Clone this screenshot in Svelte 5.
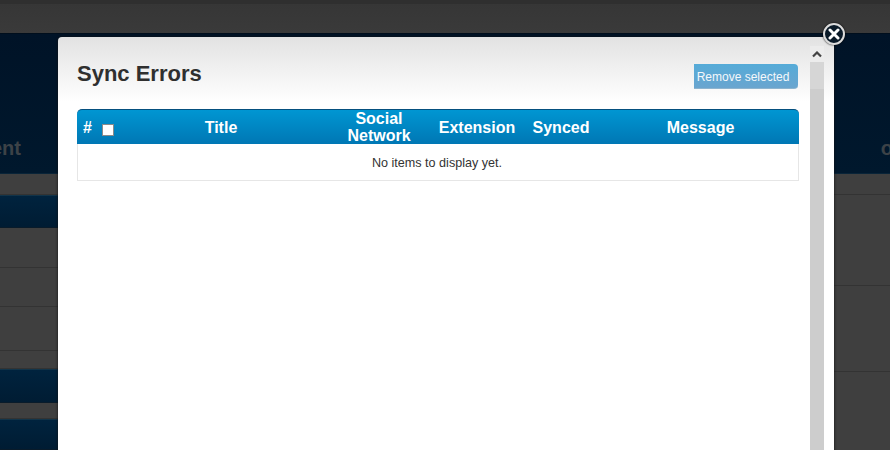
<script>
  const columns = ["Title", "Social Network", "Extension", "Synced", "Message"]
  const leftRows = [
    { kind: "gray", height: 21 },
    { kind: "navy", height: 33 },
    { kind: "gray", height: 40 },
    { kind: "gray", height: 39 },
    { kind: "gray", height: 44 },
    { kind: "gray", height: 18 },
    { kind: "navy", height: 34 },
    { kind: "gray", height: 16 },
    { kind: "navy", height: 31 },
  ]
  const rightRows = [21, 91, 86, 79]
</script>

<div class="page">
  <div class="topbar"></div>
  <div class="hero">
    <span>ent</span>
    <span>o</span>
  </div>
  <div class="rows">
    <div class="col">
      {#each leftRows as row}
        <div class="row {row.kind}" style="height: {row.height}px"></div>
      {/each}
    </div>
    <div class="col">
      {#each rightRows as height}
        <div class="row gray" style="height: {height}px"></div>
      {/each}
    </div>
  </div>

  <div class="modal">
    <div class="content">
      <div class="head">
        <h1>Sync Errors</h1>
        <button type="button">Remove selected</button>
      </div>
      <table>
        <colgroup>
          <col style="width: 21px" />
          <col style="width: 20px" />
          <col style="width: 206px" />
          <col style="width: 110px" />
          <col style="width: 86px" />
          <col style="width: 82px" />
          <col />
        </colgroup>
        <thead>
          <tr>
            <th>#</th>
            <th><span class="check"></span></th>
            {#each columns as column}
              <th>{column}</th>
            {/each}
          </tr>
        </thead>
        <tbody>
          <tr>
            <td colspan="7">No items to display yet.</td>
          </tr>
        </tbody>
      </table>
    </div>
    <div class="scrollbar">
      <div class="arrow">
        <svg width="10" height="7" viewBox="0 0 10 7">
          <path d="M1 5.5 L5 1.5 L9 5.5" fill="none" stroke="#444" stroke-width="2.2" />
        </svg>
      </div>
      <div class="thumb"></div>
    </div>
  </div>

  <div class="close">
    <svg width="12" height="12" viewBox="0 0 12 12">
      <path d="M2 2 L10 10 M10 2 L2 10" stroke="#fff" stroke-width="3" stroke-linecap="round" />
    </svg>
  </div>
</div>

<style>
  :global(body) {
    margin: 0;
    background: #3f3f3f;
  }

  .page {
    position: relative;
    width: 890px;
    height: 450px;
    overflow: hidden;
    font-family: "Liberation Sans", Arial, sans-serif;
  }

  .topbar {
    height: 33px;
    box-sizing: border-box;
    background: linear-gradient(#363636, #3a3a3a);
    border-top: 4px solid #2f2f2f;
  }

  .hero {
    height: 141px;
    box-sizing: border-box;
    padding: 102px 0 0;
    display: flex;
    justify-content: space-between;
    background: linear-gradient(#001327, #00182d);
    border-top: 1px solid #000e1c;
    border-bottom: 1px solid #092438;
    color: #3c4247;
    font-size: 20px;
    line-height: 24px;
    font-weight: bold;
  }

  .hero span:first-child {
    margin-left: -9px;
  }

  .hero span:last-child {
    margin-right: -3px;
  }

  .rows {
    display: grid;
    grid-template-columns: 445px 445px;
  }

  .row {
    box-sizing: border-box;
  }

  .gray {
    background: #3f3f3f;
    border-bottom: 1px solid #333;
  }

  .navy {
    background: linear-gradient(#00233e, #001c33);
    border-top: 1px solid #123449;
    border-bottom: 1px solid #091b2a;
  }

  .modal {
    position: absolute;
    left: 58px;
    top: 37px;
    width: 776px;
    height: 440px;
    display: flex;
    box-sizing: border-box;
    padding-right: 10px;
    border-radius: 4px 4px 0 0;
    background: linear-gradient(#e2e2e2, #ffffff 65px);
    box-shadow: 0 0 3px #111;
  }

  .content {
    flex: 1;
    padding: 0 11px 0 19px;
  }

  .head {
    height: 72px;
    display: flex;
    justify-content: space-between;
    align-items: flex-start;
  }

  h1 {
    margin: 22px 0 0;
    font-size: 22px;
    line-height: 30px;
    color: #2f2f2f;
  }

  button {
    width: 104px;
    height: 25px;
    margin: 27px 1px 0 0;
    padding: 2px 6px 0 0;
    border: 0;
    border-bottom: 1px solid #8db4cf;
    border-radius: 0 4px 4px 0;
    background: linear-gradient(#55abd8, #6aa5cf);
    color: #f4f8fb;
    font-family: inherit;
    font-size: 12px;
  }

  table {
    width: 722px;
    table-layout: fixed;
    border-collapse: separate;
    border-spacing: 0;
  }

  th {
    height: 34px;
    padding: 0;
    background: linear-gradient(#0096d2, #0077b4);
    border-top: 1px solid #05507f;
    color: #fff;
    font-size: 16px;
    line-height: 17px;
    font-weight: bold;
    text-align: center;
  }

  th:first-child {
    border-top-left-radius: 5px;
  }

  th:last-child {
    border-top-right-radius: 5px;
  }

  .check {
    display: inline-block;
    width: 10px;
    height: 10px;
    margin-top: 3px;
    background: #fff;
    border: 1px solid #8a8a8a;
    vertical-align: middle;
  }

  td {
    height: 37px;
    padding: 1px 2px 0 0;
    box-sizing: border-box;
    background: #fff;
    border: 1px solid #e6e6e6;
    border-top: 0;
    color: #333;
    font-size: 12.6px;
    text-align: center;
  }

  .scrollbar {
    width: 14px;
    margin-top: 9px;
    background: #cdcdcd;
  }

  .arrow {
    height: 16px;
    display: flex;
    align-items: center;
    justify-content: center;
    background: #ececec;
  }

  .thumb {
    height: 27px;
    background: #d6d6d6;
  }

  .close {
    position: absolute;
    left: 823px;
    top: 23px;
    width: 18px;
    height: 18px;
    display: flex;
    align-items: center;
    justify-content: center;
    border-radius: 50%;
    background: #0a1a28;
    border: 2px solid #dcdcdc;
    box-shadow: 0 0 2px #000;
  }
</style>
